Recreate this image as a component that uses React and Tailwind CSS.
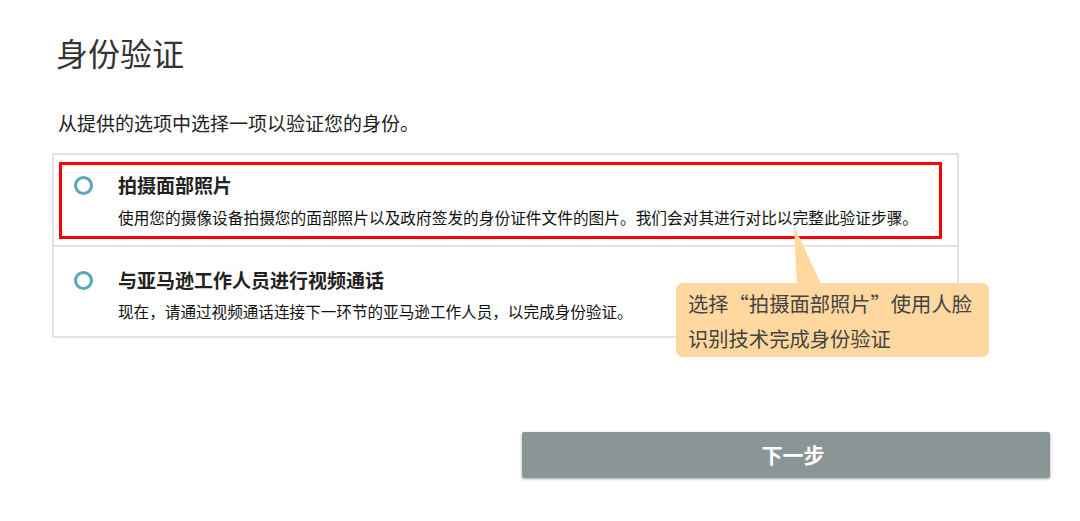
import React from 'react';

const font = { fontFamily: '"Noto Sans CJK SC", "Noto Sans", sans-serif' };

const Radio = () => (
    <div className="w-[19px] h-[19px] rounded-full border-[3px] border-[#5aa8b7] bg-white shrink-0" />
);

const App = () => {
    return (
        <div className="relative w-[1080px] h-[521px] bg-white overflow-hidden pl-[52px] pt-[32px]" style={font}>
            {/* Heading */}
            <h1 className="ml-[4px] text-[32px] leading-[40px] text-[#333333] font-normal">身份验证</h1>
            <p className="ml-[6px] mt-[37px] text-[19px] leading-[28px] text-[#222222]">从提供的选项中选择一项以验证您的身份。</p>

            {/* Options */}
            <div className="mt-[16px] w-[907px] border-2 border-[#e2e2e2]">
                <div className="pt-[7px] pl-[5px] pr-[15px] pb-[6px] border-b-2 border-[#e2e2e2]">
                    <div className="border-[3px] border-[#ff0000] flex pt-[7px] pb-[7px]">
                        <div className="w-[56px] pl-[12px] pt-[4px]">
                            <Radio />
                        </div>
                        <div>
                            <div className="text-[19px] leading-[26px] font-bold text-[#222222]">拍摄面部照片</div>
                            <div className="mt-[9px] text-[15.7px] leading-[22px] text-[#111111]">
                                使用您的摄像设备拍摄您的面部照片以及政府签发的身份证件文件的图片。我们会对其进行对比以完整此验证步骤。
                            </div>
                        </div>
                    </div>
                </div>
                <div className="flex pt-[20px] pb-[14px]">
                    <div className="w-[64px] pl-[20px] pt-[4px]">
                        <Radio />
                    </div>
                    <div>
                        <div className="text-[19px] leading-[26px] font-bold text-[#222222]">与亚马逊工作人员进行视频通话</div>
                        <div className="mt-[7px] text-[15.6px] leading-[22px] text-[#111111]">
                            现在，请通过视频通话连接下一环节的亚马逊工作人员，以完成身份验证。
                        </div>
                    </div>
                </div>
            </div>

            {/* Next button */}
            <button className="mt-[94px] ml-[470px] w-[528px] h-[46px] pl-[14px] bg-[#8a9595] rounded-[2px] shadow-[0_1px_3px_rgba(0,0,0,0.35)] text-white text-[21px] font-bold flex items-center justify-center">
                下一步
            </button>

            {/* Callout annotation */}
            <svg className="absolute left-[790px] top-[224px]" width="36" height="62" viewBox="0 0 36 62">
                <polygon points="4,2 7,62 32,62" fill="#fed89e" />
            </svg>
            <div className="absolute left-[676px] top-[283px] w-[313px] h-[74px] bg-[#fed89e] rounded-[7px] pl-[12px] pt-[3px] text-[20.3px] leading-[35px] text-[#444444]">
                <div>选择“拍摄面部照片”使用人脸</div>
                <div>识别技术完成身份验证</div>
            </div>
        </div>
    );
};

export default App;
